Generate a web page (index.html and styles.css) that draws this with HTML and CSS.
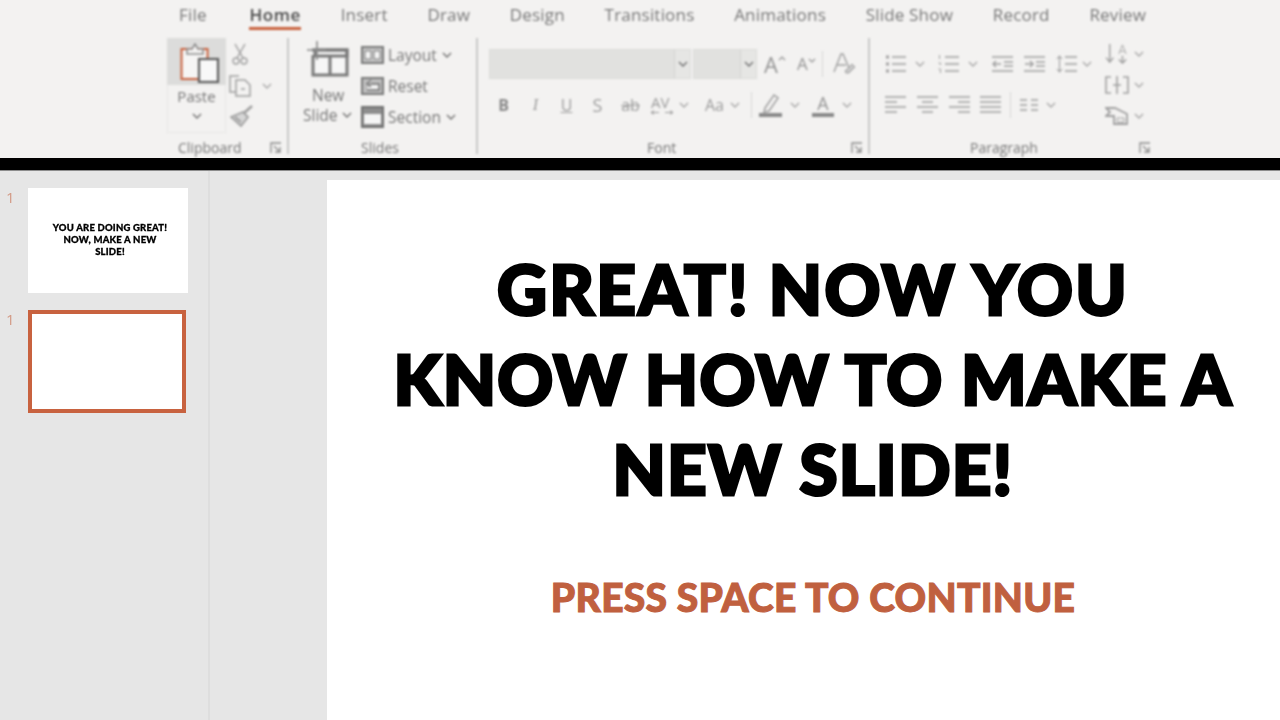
FILE: index.html
```html
<!DOCTYPE html>
<html lang="en">
<head>
<meta charset="utf-8">
<title>Slides</title>
<link rel="stylesheet" href="styles.css">
</head>
<body>
<svg class="defs" aria-hidden="true">
  <symbol id="chev" viewBox="0 0 10 6"><path d="M1 1l4 4 4-4" fill="none" stroke="currentColor" stroke-width="1.4"/></symbol>
  <symbol id="launch" viewBox="0 0 12 12"><path d="M1 11V1h10 M4 4l6 6 M10 5v5H5" fill="none" stroke="currentColor" stroke-width="1.3"/></symbol>
  <symbol id="list" viewBox="0 0 21 18"><g fill="none" stroke="currentColor" stroke-width="1.5"><path d="M7 2h14M7 9h14M7 16h14"/><path d="M1 2h3M1 9h3M1 16h3" stroke-width="3"/></g></symbol>
  <symbol id="num" viewBox="0 0 21 18"><g fill="none" stroke="currentColor" stroke-width="1.5"><path d="M7 2h14M7 9h14M7 16h14"/><path d="M1.5 0v4M.5 8h2v2M.5 14h2v4" stroke-width="1"/></g></symbol>
  <symbol id="lsp" viewBox="0 0 21 18"><g fill="none" stroke="currentColor" stroke-width="1.5"><path d="M9 2h12M9 9h12M9 16h12"/><path d="M3.5 1v16M1 4l2.5-3L6 4M1 14l2.5 3L6 14" stroke-width="1.1"/></g></symbol>
  <symbol id="outd" viewBox="0 0 21 18"><g fill="none" stroke="currentColor" stroke-width="1.5"><path d="M0 2h21M0 16h21M12 7h9M12 11h9M1 9h8M4 6L1 9l3 3"/></g></symbol>
  <symbol id="ind" viewBox="0 0 21 18"><g fill="none" stroke="currentColor" stroke-width="1.5"><path d="M0 2h21M0 16h21M12 7h9M12 11h9M1 9h8M6 6l3 3-3 3"/></g></symbol>
  <symbol id="al" viewBox="0 0 21 20"><path d="M0 2h21M0 7h12M0 12h21M0 17h12" fill="none" stroke="currentColor" stroke-width="1.5"/></symbol>
  <symbol id="ac" viewBox="0 0 21 20"><path d="M0 2h21M5 7h11M0 12h21M5 17h11" fill="none" stroke="currentColor" stroke-width="1.5"/></symbol>
  <symbol id="ar" viewBox="0 0 21 20"><path d="M0 2h21M9 7h12M0 12h21M9 17h12" fill="none" stroke="currentColor" stroke-width="1.5"/></symbol>
  <symbol id="aj" viewBox="0 0 21 20"><path d="M0 2h21M0 7h21M0 12h21M0 17h21" fill="none" stroke="currentColor" stroke-width="1.5"/></symbol>
</svg>

<header class="ribbon">
  <nav class="tabs">
    <span class="tab">File</span>
    <span class="tab active">Home</span>
    <span class="tab">Insert</span>
    <span class="tab">Draw</span>
    <span class="tab">Design</span>
    <span class="tab">Transitions</span>
    <span class="tab">Animations</span>
    <span class="tab">Slide Show</span>
    <span class="tab">Record</span>
    <span class="tab">Review</span>
  </nav>

  <div class="groups">
    <section class="group g-clip">
      <div class="body clip-body">
        <div class="paste">
          <div class="paste-top">
            <svg class="paste-ic" viewBox="0 0 40 40"><rect x="1.5" y="6" width="26" height="30" fill="#f6f5f4" stroke="#c8623f" stroke-width="2"/><path d="M7 11V6h5l3-5 3 5h5v5z" fill="#f3f2f1" stroke="#8f8f8f" stroke-width="1.6"/><rect x="19" y="16" width="19" height="23" fill="#f8f8f8" stroke="#5f5f5f" stroke-width="2.2"/></svg>
          </div>
          <div class="paste-bot"><span>Paste</span><svg class="chev dark"><use href="#chev"/></svg></div>
        </div>
        <div class="clip-col">
          <svg class="ic scissors" viewBox="0 0 16 22"><path d="M3 1l8 14M13 1L5 15" fill="none" stroke="currentColor" stroke-width="1.5"/><circle cx="4" cy="18" r="3" fill="none" stroke="currentColor" stroke-width="1.4"/><circle cx="12" cy="18" r="3" fill="none" stroke="currentColor" stroke-width="1.4"/></svg>
          <div class="copy-row"><svg class="ic copy" viewBox="0 0 23 22"><path d="M10 1H1v16h6" fill="none" stroke="currentColor" stroke-width="1.5"/><path d="M7 5h9l5 5v11H7z M12 14h4" fill="none" stroke="currentColor" stroke-width="1.5"/></svg><svg class="chev"><use href="#chev"/></svg></div>
          <svg class="ic brush" viewBox="0 0 23 22"><path d="M22 1l-8 7" stroke="currentColor" stroke-width="2.6"/><path d="M13 7l5 5-7 9-10-9z" fill="#d6d6d6" stroke="currentColor" stroke-width="1.8"/><path d="M5 12l6 5" stroke="currentColor" stroke-width="2"/></svg>
        </div>
      </div>
      <div class="lab"><span class="ml-11">Clipboard</span><svg class="launch push"><use href="#launch"/></svg></div>
    </section>

    <section class="group g-slides">
      <div class="body slides-body">
        <div class="new-slide">
          <svg class="new-ic" viewBox="0 0 42 36"><path d="M5 9h35v25H6V14" fill="#f6f6f6" stroke="#7a7a7a" stroke-width="3"/><path d="M8 9h32v6H8zM23 15v18" fill="none" stroke="#7a7a7a" stroke-width="3"/><path d="M10 0v19M0 9h19" stroke="#8a8a8a" stroke-width="1.6"/></svg>
          <span class="ns-t">New</span>
          <span class="ns-t ns2">Slide<svg class="chev dark ml-4"><use href="#chev"/></svg></span>
        </div>
        <div class="slide-col">
          <div class="sl-row"><svg class="ic sl" viewBox="0 0 23 18"><rect x="1" y="1" width="21" height="16" fill="#c4c4c4" stroke="#7a7a7a" stroke-width="2"/><path d="M4 5h6v8H4zM13 5h6v8h-6z" fill="#f5f5f5" stroke="#808080"/></svg><span>Layout</span><svg class="chev dark ml-5"><use href="#chev"/></svg></div>
          <div class="sl-row"><svg class="ic sl" viewBox="0 0 23 18"><rect x="1" y="1" width="21" height="16" fill="#bdbdbd" stroke="#7a7a7a" stroke-width="2"/><path d="M6 13h12V7H8M10 3L6 7l4 3" fill="#f3f3f3" stroke="#707070" stroke-width="1.4"/></svg><span>Reset</span></div>
          <div class="sl-row"><svg class="ic sl2" viewBox="0 0 23 22"><rect x="1" y="1" width="21" height="20" fill="#8e8e8e" stroke="#6f6f6f" stroke-width="2"/><rect x="3" y="8" width="17" height="10" fill="#f5f5f5"/></svg><span>Section</span><svg class="chev dark ml-5"><use href="#chev"/></svg></div>
        </div>
      </div>
      <div class="lab center"><span>Slides</span></div>
    </section>

    <section class="group g-font">
      <div class="body font-body">
        <div class="f-row1">
          <div class="combo c-name"><span class="combo-btn"><svg class="chev dark"><use href="#chev"/></svg></span></div>
          <div class="combo c-size"><span class="combo-btn"><svg class="chev dark"><use href="#chev"/></svg></span></div>
          <span class="glyph big ml-7">A<svg class="caret" viewBox="0 0 8 5"><path d="M1 4l3-3 3 3" fill="none" stroke="currentColor" stroke-width="1.2"/></svg></span>
          <span class="glyph mid ml-11">A<svg class="caret" viewBox="0 0 8 5"><path d="M1 1l3 3 3-3" fill="none" stroke="currentColor" stroke-width="1.2"/></svg></span>
          <i class="vsep ml-6"></i>
          <svg class="ic clear ml-10" viewBox="0 0 22 24"><path d="M1 20L8 2h2l6 14M4 13h9" fill="none" stroke="currentColor" stroke-width="1.4"/><path d="M12 19l7-7 3 3-6 6h-3z" fill="#c8c8c8" stroke="currentColor"/></svg>
        </div>
        <div class="f-row2">
          <b class="fb fb-b">B</b>
          <i class="fb fb-i ml-22">I</i>
          <u class="fb fb-u ml-19">U</u>
          <span class="fb fb-s ml-17">S</span>
          <s class="fb fb-ab ml-15">ab</s>
          <span class="av ml-9">AV<svg class="av-ar" viewBox="0 0 22 5"><path d="M0 2.5h8M0 2.5l3-2M0 2.5l3 2M22 2.5h-8M22 2.5l-3-2M22 2.5l-3 2" fill="none" stroke="currentColor"/></svg></span>
          <svg class="chev ml-6"><use href="#chev"/></svg>
          <span class="fb fb-aa ml-14">Aa</span>
          <svg class="chev ml-4"><use href="#chev"/></svg>
          <i class="vsep ml-11"></i>
          <svg class="ic hl ml-7" viewBox="0 0 23 24"><path d="M6 15l9-13 4 3-9 13-5 1z" fill="none" stroke="currentColor" stroke-width="1.5"/><path d="M0 22h23" stroke="#8a8a8a" stroke-width="4"/></svg>
          <svg class="chev ml-8"><use href="#chev"/></svg>
          <span class="under-a ml-12">A</span>
          <svg class="chev ml-8"><use href="#chev"/></svg>
        </div>
      </div>
      <div class="lab"><span class="ml-font">Font</span><svg class="launch push"><use href="#launch"/></svg></div>
    </section>

    <section class="group g-para">
      <div class="body para-body">
        <div class="para-main">
          <div class="p-row1">
            <svg class="ic pi"><use href="#list"/></svg><svg class="chev ml-9"><use href="#chev"/></svg>
            <svg class="ic pi ml-13"><use href="#num"/></svg><svg class="chev ml-9"><use href="#chev"/></svg>
            <svg class="ic pi ml-14"><use href="#outd"/></svg>
            <svg class="ic pi ml-11"><use href="#ind"/></svg>
            <svg class="ic pi ml-11"><use href="#lsp"/></svg><svg class="chev ml-5"><use href="#chev"/></svg>
          </div>
          <div class="p-row2">
            <svg class="ic ai"><use href="#al"/></svg>
            <svg class="ic ai ml-11"><use href="#ac"/></svg>
            <svg class="ic ai ml-11"><use href="#ar"/></svg>
            <svg class="ic ai ml-10"><use href="#aj"/></svg>
            <i class="vsep ml-9"></i>
            <svg class="ic col ml-9" viewBox="0 0 18 12"><path d="M0 1h7M11 1h7M0 6h7M11 6h7M0 11h7M11 11h7" fill="none" stroke="currentColor" stroke-width="1.4"/></svg>
            <svg class="chev ml-8"><use href="#chev"/></svg>
          </div>
        </div>
        <div class="para-side">
          <div class="side-row"><svg class="ic side" viewBox="0 0 24 22"><path d="M4 0v19M0 15l4 5 4-5M18 13v7M14 17l4 4 4-4" fill="none" stroke="currentColor" stroke-width="1.6"/><path d="M14 11l4-10 4 10M15.5 8h5" fill="none" stroke="currentColor"/></svg><svg class="chev ml-5"><use href="#chev"/></svg></div>
          <div class="side-row"><svg class="ic side" viewBox="0 0 24 18"><path d="M6 1H1v16h5M18 1h5v16h-5M12 0v18M8 9h8" fill="none" stroke="currentColor" stroke-width="1.6"/></svg><svg class="chev ml-5"><use href="#chev"/></svg></div>
          <div class="side-row"><svg class="ic side" viewBox="0 0 24 18"><path d="M1 1h9l12 6v10H9V9H1l4-4z" fill="none" stroke="currentColor" stroke-width="1.8"/><path d="M12 11h7v4h-7z" fill="none" stroke="currentColor"/></svg><svg class="chev ml-5"><use href="#chev"/></svg></div>
        </div>
      </div>
      <div class="lab"><span class="ml-para">Paragraph</span><svg class="launch push"><use href="#launch"/></svg></div>
    </section>
  </div>
</header>

<div class="bar"></div>

<main class="workspace">
  <aside class="sidebar">
    <div class="thumb-row">
      <span class="thumb-num">1</span>
      <div class="thumb first">
        <p>YOU ARE DOING GREAT!<br>NOW, MAKE A NEW<br>SLIDE!</p>
      </div>
    </div>
    <div class="thumb-row second">
      <span class="thumb-num">1</span>
      <div class="thumb selected"></div>
    </div>
  </aside>
  <div class="stage">
    <article class="slide">
      <h1 class="title"><span class="wide">GREAT! NOW YOU</span><br>KNOW HOW TO MAKE A<br>NEW SLIDE!</h1>
      <p class="cont">PRESS SPACE TO CONTINUE</p>
    </article>
  </div>
</main>
</body>
</html>
```

FILE: styles.css
```css
* { box-sizing: border-box; }
html, body { margin: 0; height: 720px; overflow: hidden; }
body { background: #e6e6e6; font-family: "Open Sans", "Liberation Sans", sans-serif; color: #6f6f6f; }
.defs { display: none; }

.ribbon { height: 158px; background: #f3f2f1; overflow: hidden; }
.tabs { display: flex; height: 36px; padding: 2px 0 0 179px; gap: 39.7px; font-size: 17px; line-height: 25px; letter-spacing: .2px; color: #777; filter: blur(.9px); }
.tab { height: 28px; }
.tab:first-child { margin-right: 3px; }
.tab.active { color: #4a4a4a; font-weight: 600; letter-spacing: .6px; border-bottom: 3px solid #c8603c; }

.groups { display: flex; padding: 2px 0 0 167px; filter: blur(.9px); }
.group { height: 116px; display: flex; flex-direction: column; border-right: 2px solid #c9c9c9; }
.g-clip { width: 122px; }
.g-slides { width: 189px; }
.g-font { width: 392px; }
.g-para { width: 286px; border-right: 0; }
.body { height: 103px; display: flex; }
.lab { height: 13px; display: flex; align-items: center; font-size: 14px; line-height: 14px; color: #777; padding-right: 5px; }
.lab.center { justify-content: center; }
.push { margin-left: auto; }
.launch { width: 12px; height: 12px; color: #8a8a8a; }
.ml-font { margin-left: 169px; }
.ml-para { margin-left: 100px; }

.chev { width: 10px; height: 6px; flex: none; color: #a9a9a9; }
.chev.dark { color: #707070; }
.ic { flex: none; color: #a0a0a0; display: block; }
.ml-4 { margin-left: 4px; } .ml-5 { margin-left: 5px; } .ml-6 { margin-left: 6px; } .ml-7 { margin-left: 7px; }
.ml-8 { margin-left: 8px; } .ml-9 { margin-left: 9px; } .ml-10 { margin-left: 10px; } .ml-11 { margin-left: 11px; }
.ml-12 { margin-left: 12px; } .ml-13 { margin-left: 13px; } .ml-14 { margin-left: 14px; } .ml-15 { margin-left: 15px; }
.ml-17 { margin-left: 17px; } .ml-19 { margin-left: 19px; } .ml-22 { margin-left: 22px; }

/* Clipboard */
.paste { width: 59px; height: 95px; display: flex; flex-direction: column; }
.paste-top { height: 47px; background: #dcdcdb; padding: 5px 0 0 13px; }
.paste-ic { width: 40px; height: 40px; display: block; }
.paste-bot { height: 48px; border: 1px solid #e8e8e7; border-top: 0; display: flex; flex-direction: column; align-items: center; font-size: 15px; line-height: 22px; color: #757575; }
.paste-bot .chev { margin-top: 6px; }
.clip-col { display: flex; flex-direction: column; margin-left: 3px; }
.scissors { width: 16px; height: 22px; margin: 5px 0 0 3px; }
.copy-row { display: flex; align-items: center; margin-top: 10px; }
.copy { width: 23px; height: 22px; }
.copy-row .chev { margin-left: 10px; }
.brush { width: 23px; height: 22px; margin: 8px 0 0 1px; }

/* Slides */
.new-slide { width: 72px; display: flex; flex-direction: column; align-items: flex-start; }
.new-ic { width: 42px; height: 36px; margin: 3px 0 0 18px; }
.ns-t { font-size: 15.5px; line-height: 20px; color: #767676; margin-left: 23px; }
.ns-t:first-of-type { margin-top: 8px; }
.ns2 { margin-left: 14px; display: flex; align-items: center; }
.slide-col { display: flex; flex-direction: column; gap: 11px; padding-top: 7px; }
.sl-row { height: 20px; display: flex; align-items: center; font-size: 15.5px; color: #767676; }
.sl { width: 23px; height: 18px; margin-right: 4px; }
.sl2 { width: 23px; height: 22px; margin-right: 4px; }

/* Font */
.font-body { flex-direction: column; padding-left: 11px; }
.f-row1 { display: flex; align-items: center; height: 30px; margin-top: 11px; }
.combo { height: 30px; background: #e1e1df; border: 1px solid #dcdcda; display: flex; justify-content: flex-end; }
.combo-btn { width: 16px; border-left: 1px solid #d2d2d0; background: #e6e6e4; display: flex; align-items: center; justify-content: center; }
.c-name { width: 202px; }
.c-size { width: 64px; margin-left: 2px; }
.glyph { color: #959595; display: flex; align-items: flex-start; }
.caret { width: 8px; height: 5px; margin-top: 5px; }
.big { font-size: 22px; line-height: 26px; }
.mid { font-size: 17px; line-height: 22px; }
.vsep { display: block; width: 1px; height: 26px; background: #d8d8d8; flex: none; }
.clear { width: 22px; height: 24px; }
.f-row2 { display: flex; align-items: center; height: 30px; margin-top: 11px; padding-left: 9px; }
.fb { color: #9c9c9c; font-size: 16px; line-height: 24px; text-align: center; flex: none; }
.fb-b { width: 11px; font-weight: 700; color: #8a8a8a; }
.fb-i { width: 9px; font-family: "Liberation Serif", serif; }
.fb-u { width: 15px; text-decoration-thickness: 1px; }
.fb-s { width: 13px; font-size: 18px; }
.fb-ab { width: 23px; }
.fb-aa { width: 23px; }
.av { width: 22px; font-size: 15px; line-height: 15px; color: #9c9c9c; display: flex; flex-direction: column; flex: none; }
.av-ar { width: 22px; height: 5px; }
.hl { width: 23px; height: 24px; }
.under-a { width: 22px; height: 24px; font-size: 18px; line-height: 20px; text-align: center; color: #959595; border-bottom: 4px solid #8a8a8a; flex: none; }

/* Paragraph */
.para-body { padding-left: 15px; }
.para-main { width: 220px; display: flex; flex-direction: column; }
.p-row1 { display: flex; align-items: center; height: 18px; margin-top: 17px; }
.p-row2 { display: flex; align-items: center; height: 26px; margin-top: 19px; }
.pi { width: 21px; height: 18px; }
.ai { width: 21px; height: 20px; }
.col { width: 18px; height: 12px; }
.para-side { display: flex; flex-direction: column; gap: 9px; padding-top: 5px; }
.side-row { height: 22px; display: flex; align-items: center; }
.side { width: 24px; height: 20px; }

.bar { height: 13px; background: #000; border-bottom: 1px solid #8c8c8c; }

/* Workspace */
.workspace { height: 549px; display: flex; background: #e6e6e6; }
.sidebar { width: 210px; border-right: 2px solid #dedede; padding-top: 17px; flex: none; }
.thumb-row { display: flex; height: 105px; filter: blur(.35px); }
.thumb-row.second { margin-top: 17px; height: 103px; }
.thumb-num { width: 28px; padding-left: 6px; font-size: 15px; line-height: 18px; color: #d39a85; }
.thumb { background: #fff; flex: none; }
.first { width: 160px; height: 105px; display: flex; align-items: center; justify-content: center; padding-left: 4px; }
.first p { margin: 0 0 2px; font: 900 9.5px/12px Lato, "Liberation Sans", sans-serif; color: #000; text-align: center; letter-spacing: .2px; -webkit-text-stroke: .3px #000; }
.selected { width: 158px; height: 103px; border: 4px solid #c8623f; }

.stage { flex: 1; padding: 9px 0 0 117px; }
.slide { height: 540px; background: #fff; display: flex; flex-direction: column; align-items: center; padding: 64px 0 0 19px; }
.title { margin: 0; font: 900 69px/90px Lato, "Liberation Sans", sans-serif; color: #000; text-align: center; letter-spacing: 1.2px; white-space: nowrap; -webkit-text-stroke: 3px #000; }
.wide { letter-spacing: 2.3px; }
.cont { margin: 59px 0 0; font: 900 39px/48px Lato, "Liberation Sans", sans-serif; color: #c0603f; letter-spacing: .25px; white-space: nowrap; -webkit-text-stroke: 1px #c0603f; }
```
